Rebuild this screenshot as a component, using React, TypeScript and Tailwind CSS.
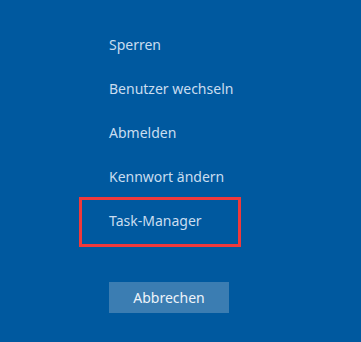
export default function App() {
  const items = ['Sperren', 'Benutzer wechseln', 'Abmelden', 'Kennwort ändern'];
  return (
    <div
      className="w-[361px] h-[342px] bg-[#00599f] overflow-hidden pl-[109px] pt-[22px]"
      style={{ fontFamily: '"Segoe UI", "Noto Sans", sans-serif' }}
    >
      {items.map((t) => (
        <div key={t} className="h-[44px] flex items-center text-[14px] text-[#c9ddf0]">
          {t}
        </div>
      ))}
      <div className="relative h-[44px] flex items-center text-[14px] text-[#c9ddf0]">
        Task-Manager
        <div className="absolute left-[-30px] top-[-1px] w-[162px] h-[50px] border-[3px] border-[#f0393b]" />
      </div>
      <button className="mt-[40px] w-[120px] h-[31px] bg-[#3b7db2] text-[14px] text-[#eef4fa]">
        Abbrechen
      </button>
    </div>
  );
}
